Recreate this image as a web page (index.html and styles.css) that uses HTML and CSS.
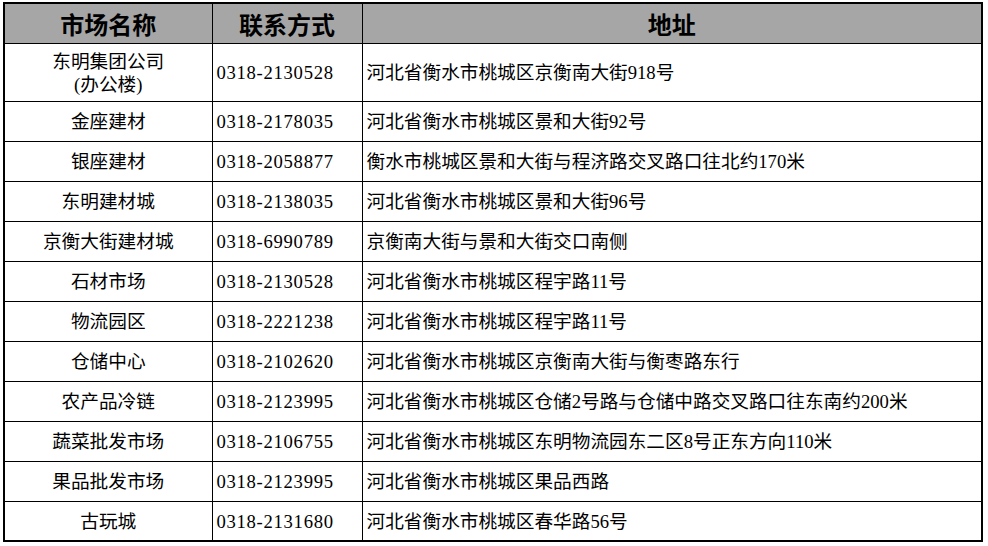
FILE: index.html
```html
<!DOCTYPE html>
<html lang="zh-CN">
<head>
<meta charset="utf-8">
<title>市场名称</title>
<link rel="stylesheet" href="styles.css">
</head>
<body>
<table class="markets">
  <colgroup>
    <col class="c-name">
    <col class="c-phone">
    <col class="c-addr">
  </colgroup>
  <thead>
    <tr class="head">
      <th>市场名称</th>
      <th>联系方式</th>
      <th>地址</th>
    </tr>
  </thead>
  <tbody>
    <tr class="tall">
      <td class="name">东明集团公司<br>(办公楼)</td>
      <td class="phone">0318-2130528</td>
      <td class="addr">河北省衡水市桃城区京衡南大街918号</td>
    </tr>
    <tr>
      <td class="name">金座建材</td>
      <td class="phone">0318-2178035</td>
      <td class="addr">河北省衡水市桃城区景和大街92号</td>
    </tr>
    <tr>
      <td class="name">银座建材</td>
      <td class="phone">0318-2058877</td>
      <td class="addr">衡水市桃城区景和大街与程济路交叉路口往北约170米</td>
    </tr>
    <tr>
      <td class="name">东明建材城</td>
      <td class="phone">0318-2138035</td>
      <td class="addr">河北省衡水市桃城区景和大街96号</td>
    </tr>
    <tr>
      <td class="name">京衡大街建材城</td>
      <td class="phone">0318-6990789</td>
      <td class="addr">京衡南大街与景和大街交口南侧</td>
    </tr>
    <tr>
      <td class="name">石材市场</td>
      <td class="phone">0318-2130528</td>
      <td class="addr">河北省衡水市桃城区程宇路11号</td>
    </tr>
    <tr>
      <td class="name">物流园区</td>
      <td class="phone">0318-2221238</td>
      <td class="addr">河北省衡水市桃城区程宇路11号</td>
    </tr>
    <tr>
      <td class="name">仓储中心</td>
      <td class="phone">0318-2102620</td>
      <td class="addr">河北省衡水市桃城区京衡南大街与衡枣路东行</td>
    </tr>
    <tr>
      <td class="name">农产品冷链</td>
      <td class="phone">0318-2123995</td>
      <td class="addr">河北省衡水市桃城区仓储2号路与仓储中路交叉路口往东南约200米</td>
    </tr>
    <tr>
      <td class="name">蔬菜批发市场</td>
      <td class="phone">0318-2106755</td>
      <td class="addr">河北省衡水市桃城区东明物流园东二区8号正东方向110米</td>
    </tr>
    <tr>
      <td class="name">果品批发市场</td>
      <td class="phone">0318-2123995</td>
      <td class="addr">河北省衡水市桃城区果品西路</td>
    </tr>
    <tr>
      <td class="name">古玩城</td>
      <td class="phone">0318-2131680</td>
      <td class="addr">河北省衡水市桃城区春华路56号</td>
    </tr>
  </tbody>
</table>
</body>
</html>
```

FILE: styles.css
```css
html, body {
  margin: 0;
  padding: 0;
  background: #ffffff;
}

body {
  padding: 2px 0 0 3px;
}

.markets {
  border-collapse: collapse;
  table-layout: fixed;
  width: 980px;
  border: 2px solid #000;
  font-family: "Liberation Serif", "Noto Sans CJK SC", serif;
  font-size: 18.67px;
  color: #000;
}

.c-name { width: 208px; }
.c-phone { width: 150px; }
.c-addr { width: auto; }

.markets th,
.markets td {
  border: 1px solid #000;
  padding: 3px 4px 0;
  white-space: nowrap;
  vertical-align: middle;
}

.markets tr {
  height: 40px;
}

.markets tr.tall {
  height: 58px;
}

.markets th {
  background: #a6a6a6;
  font-family: "Noto Sans CJK SC", sans-serif;
  font-weight: 700;
  font-size: 24px;
  line-height: 28px;
  text-align: center;
  padding-top: 1px;
}

.markets td {
  line-height: 22.5px;
  font-weight: 400;
}

.markets td.name {
  text-align: center;
}

.markets td.phone {
  text-align: left;
  letter-spacing: 0.7px;
}

.markets td.addr {
  text-align: left;
}
```
